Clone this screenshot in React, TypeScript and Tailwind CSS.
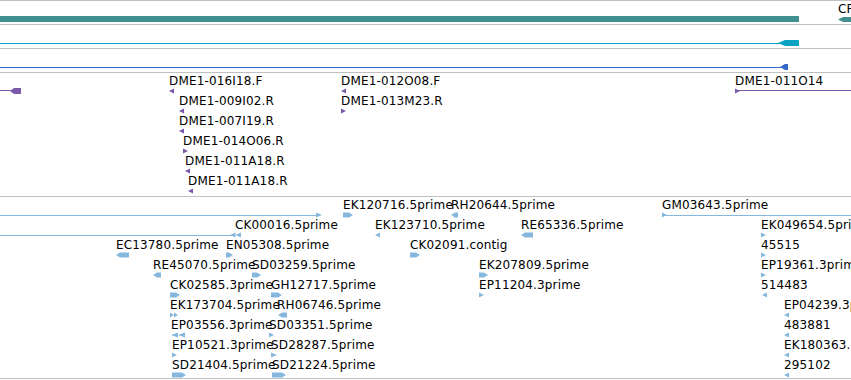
import React from "react";

type Dir = "l" | "r" | "ll" | "rr";
type Feat = { x: number; w: number; dir: Dir; y: number; h: number; tip?: number };
type Label = { t: string; x: number; y: number };
type Line = { x1: number; x2: number; y: number };

function pts(f: Feat): string[] {
  const { x, y, w, h } = f;
  const tip = Math.min(f.tip ?? 4, w);
  if (f.dir === "r")
    return [`${x},${y} ${x + w - tip},${y} ${x + w},${y + h / 2} ${x + w - tip},${y + h} ${x},${y + h}`];
  if (f.dir === "l")
    return [`${x + w},${y} ${x + tip},${y} ${x},${y + h / 2} ${x + tip},${y + h} ${x + w},${y + h}`];
  const half = w / 2;
  if (f.dir === "rr")
    return [
      `${x},${y} ${x + half},${y + h / 2} ${x},${y + h}`,
      `${x + half},${y} ${x + w},${y + h / 2} ${x + half},${y + h}`,
    ];
  return [
    `${x + half},${y} ${x},${y + h / 2} ${x + half},${y + h}`,
    `${x + w},${y} ${x + half},${y + h / 2} ${x + w},${y + h}`,
  ];
}

function Track({
  h,
  color,
  feats,
  lines,
  labels,
  heightClass,
}: {
  h: number;
  color: string;
  feats: Feat[];
  lines: Line[];
  labels: Label[];
  heightClass: string;
}) {
  return (
    <div className={`relative ${heightClass} border-b border-[#c0c0c0] shrink-0`}>
      <svg className="absolute left-0 top-0" width={851} height={h} viewBox={`0 0 851 ${h}`}>
        {lines.map((l, i) => (
          <line key={"l" + i} x1={l.x1} x2={l.x2} y1={l.y} y2={l.y} stroke={color} strokeWidth={1} />
        ))}
        {feats.map((f, i) =>
          pts(f).map((p, j) => <polygon key={i + "-" + j} points={p} fill={color} />)
        )}
      </svg>
      {labels.map((lb, i) => (
        <div key={i} className="absolute whitespace-nowrap" style={{ left: lb.x, top: lb.y }}>
          {lb.t}
        </div>
      ))}
    </div>
  );
}

const T4: { feats: Feat[]; lines: Line[]; labels: Label[] } = (() => {
  const rowsL: [string, number, Dir, number][] = [
    ["DME1-016I18.F", 169, "l", 0],
    ["DME1-009I02.R", 179, "l", 1],
    ["DME1-007I19.R", 179, "l", 2],
    ["DME1-014O06.R", 183, "r", 3],
    ["DME1-011A18.R", 185, "l", 4],
    ["DME1-011A18.R", 188, "l", 5],
    ["DME1-012O08.F", 341, "l", 0],
    ["DME1-013M23.R", 341, "r", 1],
    ["DME1-011O14", 735, "r", 0],
  ];
  const feats: Feat[] = rowsL.map(([, x, dir, r]) => ({ x, w: 5, dir, y: 15.5 + 20 * r, h: 5, tip: 5 }));
  feats.push({ x: 10, w: 11, dir: "l", y: 15, h: 6, tip: 4 });
  const labels: Label[] = rowsL.map(([t, x, , r]) => ({ t, x, y: 1 + 20 * r }));
  const lines: Line[] = [
    { x1: 0, x2: 11, y: 17.5 },
    { x1: 736, x2: 851, y: 17.5 },
  ];
  return { feats, lines, labels };
})();

const T5: { feats: Feat[]; lines: Line[]; labels: Label[] } = (() => {
  // [label, x, featureX, featureW, dir, row]
  const rows: [string, number, number, number, Dir, number][] = [
    ["EK120716.5prime", 343, 343, 10, "r", 0],
    ["RH20644.5prime", 451, 451, 7, "l", 0],
    ["GM03643.5prime", 662, 662, 5, "r", 0],
    ["CK00016.5prime", 235, 230, 11, "ll", 1],
    ["EK123710.5prime", 375, 375, 5, "l", 1],
    ["RE65336.5prime", 521, 521, 12, "l", 1],
    ["EK049654.5prime", 761, 761, 5, "r", 1],
    ["EC13780.5prime", 116, 116, 13, "l", 2],
    ["EN05308.5prime", 226, 226, 7, "r", 2],
    ["CK02091.contig", 410, 410, 10, "r", 2],
    ["45515", 761, 761, 5, "r", 2],
    ["RE45070.5prime", 153, 153, 8, "l", 3],
    ["SD03259.5prime", 252, 252, 9, "r", 3],
    ["EK207809.5prime", 479, 479, 9, "r", 3],
    ["EP19361.3prime", 761, 761, 5, "r", 3],
    ["CK02585.3prime", 170, 170, 10, "r", 4],
    ["GH12717.5prime", 271, 271, 11, "r", 4],
    ["EP11204.3prime", 479, 479, 5, "r", 4],
    ["514483", 761, 762, 5, "l", 4],
    ["EK173704.5prime", 170, 170, 8, "rr", 5],
    ["RH06746.5prime", 277, 278, 9, "l", 5],
    ["EP04239.3prime", 784, 784, 5, "l", 5],
    ["EP03556.3prime", 171, 171, 14, "ll", 6],
    ["SD03351.5prime", 269, 269, 5, "r", 6],
    ["483881", 784, 784, 5, "l", 6],
    ["EP10521.3prime", 172, 172, 5, "r", 7],
    ["SD28287.5prime", 271, 271, 6, "r", 7],
    ["EK180363.5prime", 784, 784, 5, "l", 7],
    ["SD21404.5prime", 172, 172, 14, "r", 8],
    ["SD21224.5prime", 272, 272, 14, "r", 8],
    ["295102", 784, 784, 5, "l", 8],
  ];
  const feats: Feat[] = rows.map(([, , fx, fw, dir, r]) => ({
    x: fx,
    w: fw,
    dir,
    y: 15.5 + 20 * r,
    h: 5,
    tip: fw <= 6 ? fw : 4,
  }));
  feats.push({ x: 316, w: 6, dir: "r", y: 15.5, h: 5, tip: 6 });
  const labels: Label[] = rows.map(([t, x, , , , r]) => ({ t, x, y: 1 + 20 * r }));
  const lines: Line[] = [
    { x1: 0, x2: 318, y: 18.5 },
    { x1: 664, x2: 851, y: 18.5 },
    { x1: 0, x2: 232, y: 38.5 },
  ];
  return { feats, lines, labels };
})();

export default function App() {
  return (
    <div className="w-[851px] h-[380px] overflow-hidden bg-white border-t border-[#c0c0c0] flex flex-col font-['DejaVu_Sans',sans-serif] text-[12px] leading-[14px] tracking-[0.15px] text-black">
      <Track
        heightClass="h-[24px]"
        h={23}
        color="#418f8f"
        feats={[
          { x: 0, w: 799, dir: "r", y: 15, h: 6, tip: 0.01 },
          { x: 838, w: 13, dir: "l", y: 16, h: 5, tip: 5 },
        ]}
        lines={[]}
        labels={[{ t: "CP", x: 838, y: 1 }]}
      />
      <Track
        heightClass="h-[24px]"
        h={23}
        color="#0aa2c2"
        feats={[{ x: 778, w: 21, dir: "l", y: 15, h: 6, tip: 7 }]}
        lines={[{ x1: 0, x2: 780, y: 18.5 }]}
        labels={[]}
      />
      <Track
        heightClass="h-[24px]"
        h={23}
        color="#3468cc"
        feats={[{ x: 780, w: 8, dir: "l", y: 15, h: 6, tip: 5 }]}
        lines={[{ x1: 0, x2: 782, y: 18.5 }]}
        labels={[]}
      />
      <Track heightClass="h-[124px]" h={123} color="#7a5aa8" feats={T4.feats} lines={T4.lines} labels={T4.labels} />
      <Track heightClass="h-[182px]" h={181} color="#86b8de" feats={T5.feats} lines={T5.lines} labels={T5.labels} />
    </div>
  );
}
